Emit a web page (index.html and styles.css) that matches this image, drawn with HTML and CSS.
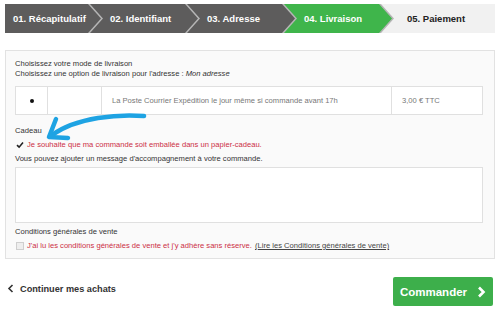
FILE: index.html
```html
<!DOCTYPE html>
<html lang="fr">
  <head>
    <meta charset="UTF-8" />
    <title>Commande - Livraison</title>
    <link rel="stylesheet" href="styles.css">
  </head>
  <body>
    <div class="page">
      <div class="steps">
        <div class="step first">01. Récapitulatif</div>
        <div class="step">02. Identifiant</div>
        <div class="step">03. Adresse</div>
        <div class="step current">04. Livraison</div>
        <div class="step next last">05. Paiement</div>
      </div>

      <div class="panel">
        <p class="title">Choisissez votre mode de livraison</p>
        <p class="title">Choisissez une option de livraison pour l'adresse : <em>Mon adresse</em></p>

        <div class="carrier">
          <div class="cell radio"><span class="dot"></span></div>
          <div class="cell logo"></div>
          <div class="cell name">La Poste Courrier Expédition le jour même si commande avant 17h</div>
          <div class="cell price">3,00 € TTC</div>
        </div>

        <p class="label gift">Cadeau</p>
        <label class="check red">
          <span class="box checked">
            <svg width="8" height="8" viewBox="0 0 8 8"><path d="M1 4.2 L3.1 6.2 L7 1.6" fill="none" stroke="#222" stroke-width="1.6"/></svg>
          </span>
          Je souhaite que ma commande soit emballée dans un papier-cadeau.
        </label>
        <p class="label msg">Vous pouvez ajouter un message d'accompagnement à votre commande.</p>
        <textarea class="message"></textarea>

        <p class="label cgv">Conditions générales de vente</p>
        <label class="check red">
          <span class="box"></span>
          J'ai lu les conditions générales de vente et j'y adhère sans réserve.
          <a href="#" class="link">(Lire les Conditions générales de vente)</a>
        </label>

        <svg class="pointer" width="112" height="30" viewBox="0 0 112 30">
          <path d="M107 3 C82 1 40 4 15 22" fill="none" stroke="#1ea3e3" stroke-width="4.5" stroke-linecap="round"/>
          <path d="M19 6 L12 24 L31 25" fill="none" stroke="#1ea3e3" stroke-width="4.5" stroke-linecap="round" stroke-linejoin="round"/>
        </svg>
      </div>

      <div class="actions">
        <a href="#" class="back">
          <svg width="7" height="9" viewBox="0 0 7 9"><path d="M5.5 1 L2 4.5 L5.5 8" fill="none" stroke="#333" stroke-width="1.6"/></svg>
          Continuer mes achats
        </a>
        <a href="#" class="order">
          Commander
          <svg width="9" height="12" viewBox="0 0 9 12"><path d="M2 1.5 L6.5 6 L2 10.5" fill="none" stroke="#fff" stroke-width="2.6"/></svg>
        </a>
      </div>
    </div>
  </body>
</html>
```

FILE: styles.css
```css
* {
  padding: 0;
  margin: 0;
  box-sizing: border-box;
}
body {
  background: #fff;
  font-family: "Liberation Sans", Arial, sans-serif;
  color: #333;
}
.page {
  padding: 4px 5px 0 5px;
}

/* etapes */
.steps {
  display: flex;
  height: 29px;
  background: #b5b5b5;
}
.step {
  flex: 1;
  margin-left: -11px;
  padding-left: 20px;
  display: flex;
  align-items: center;
  font-size: 9.5px;
  font-weight: bold;
  color: #fff;
  background: #5d5c5c;
  clip-path: polygon(0 0, calc(100% - 13px) 0, 100% 50%, calc(100% - 13px) 100%, 0 100%, 13px 50%);
}
.step.first {
  margin-left: 0;
  padding-left: 8px;
  clip-path: polygon(0 0, calc(100% - 13px) 0, 100% 50%, calc(100% - 13px) 100%, 0 100%);
}
.step.current {
  background: #3fb54b;
}
.step.next {
  background: #f1f1f1;
  color: #222;
  padding-left: 26px;
}
.step.last {
  clip-path: polygon(0 0, 100% 0, 100% 100%, 0 100%, 13px 50%);
}

/* bloc */
.panel {
  position: relative;
  margin-top: 17px;
  background: #fafafa;
  border: 1px solid #e2e2e2;
  padding: 8px 11px 6px 9px;
  font-size: 7.6px;
}
.title {
  line-height: 9.5px;
}
.carrier {
  display: flex;
  height: 29px;
  margin-top: 8px;
  background: #fff;
  border: 1px solid #e0e0e0;
  color: #777;
}
.cell {
  display: flex;
  align-items: center;
  border-left: 1px solid #e0e0e0;
}
.cell:first-child {
  border-left: none;
}
.radio {
  width: 31px;
  justify-content: center;
}
.dot {
  width: 4px;
  height: 4px;
  border-radius: 50%;
  background: #111;
}
.logo {
  width: 54px;
}
.name {
  flex: 1;
  padding-left: 10px;
}
.price {
  width: 91px;
  padding-left: 10px;
}
.label {
  line-height: 11px;
}
.gift {
  margin-top: 10px;
}
.msg {
  margin-top: 2px;
}
.check {
  display: flex;
  align-items: center;
  gap: 3px;
  height: 13px;
  margin-top: 2px;
  margin-left: 1px;
}
.red {
  color: #cc2f45;
}
.box {
  width: 8px;
  height: 8px;
  border: 1px solid #cfcfcf;
  background: #eee;
  display: flex;
  align-items: center;
  justify-content: center;
}
.box.checked {
  border: none;
  background: none;
}
.link {
  color: #444;
  text-decoration: underline;
}
.message {
  display: block;
  width: 100%;
  height: 56px;
  margin-top: 3px;
  border: 1px solid #e0e0e0;
  background: #fff;
  resize: none;
}
.cgv {
  margin-top: 3px;
}
.pointer {
  position: absolute;
  left: 31px;
  top: 62px;
}

/* bas de page */
.actions {
  display: flex;
  justify-content: space-between;
  align-items: center;
  margin-top: 18px;
  padding-right: 2px;
}
.back {
  display: flex;
  align-items: center;
  gap: 6px;
  padding-left: 2px;
  margin-bottom: 6px;
  font-size: 9.2px;
  font-weight: bold;
  color: #333;
  text-decoration: none;
}
.order {
  display: flex;
  align-items: center;
  justify-content: center;
  gap: 10px;
  width: 100px;
  height: 29px;
  background: #3daf4b;
  border-radius: 2px;
  color: #fff;
  font-size: 11.5px;
  font-weight: bold;
  text-decoration: none;
}
```
